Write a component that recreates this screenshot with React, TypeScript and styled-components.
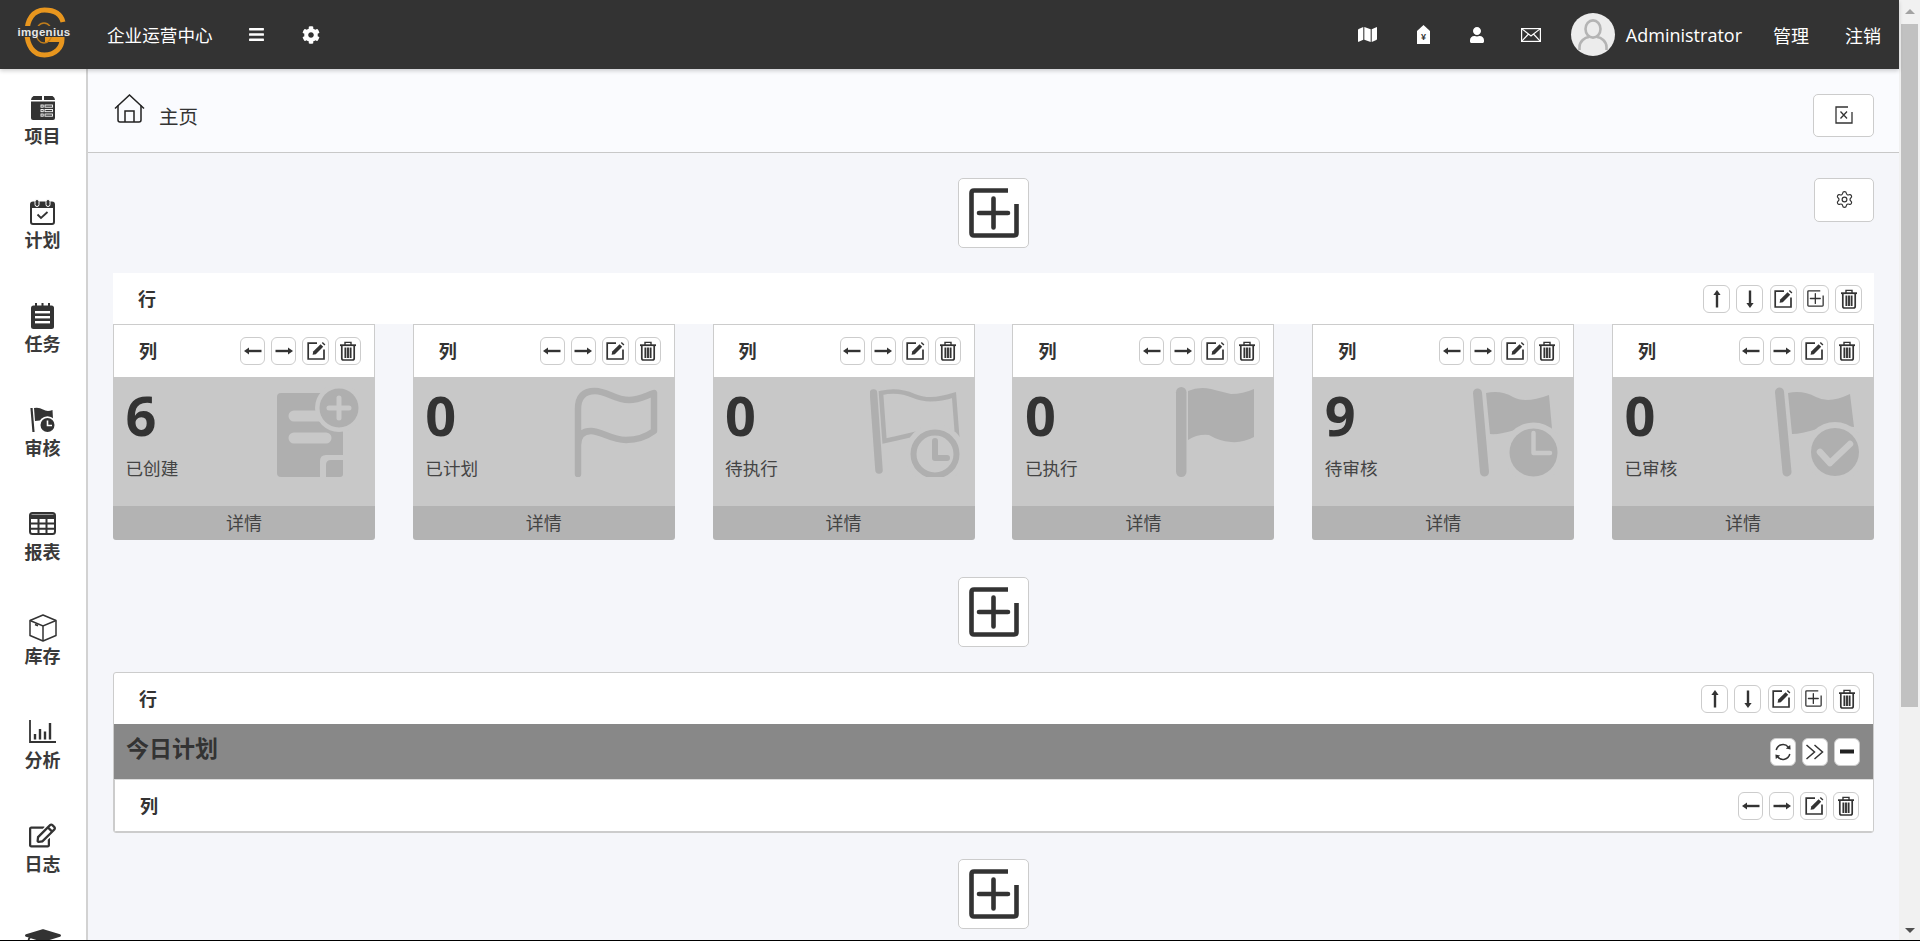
import React from "react";
import styled, { createGlobalStyle } from "styled-components";
import { FaBars, FaCog, FaMap, FaUser, FaRegEdit, FaGraduationCap } from "react-icons/fa";
import { Settings } from "lucide-react";

const INK = "#333";
const SHADE = "#afafaf";
const CARD = "#c8c8c8";

const Global = createGlobalStyle`
  html, body { margin: 0; padding: 0; height: 941px; overflow: hidden; background: #f5f6fa; }
  body { font-family: "Open Sans", "Noto Sans CJK SC", sans-serif; color: ${INK}; }
  * { box-sizing: border-box; }
`;

const Page = styled.div`
  display: flex;
  height: 941px;
  border-bottom: 1px solid #000;
  overflow: hidden;
`;
const Main = styled.div`
  flex: 1;
  min-width: 0;
  display: flex;
  flex-direction: column;
`;
const Rail = styled.div`
  width: 21px;
  background: #f1f1f1;
  display: flex;
  flex-direction: column;
  align-items: center;
`;
const RailArrow = styled.div<{ $down?: boolean }>`
  width: 0;
  height: 0;
  border-left: 5px solid transparent;
  border-right: 5px solid transparent;
  margin-left: 1px;
  ${(p) =>
    p.$down
      ? `border-top: 5px solid #505050; margin-top: 221px;`
      : `border-bottom: 5px solid #a3a3a3; margin-top: 9px;`}
`;
const RailThumb = styled.div`
  width: 17px;
  height: 683px;
  background: #c1c1c1;
  margin-top: 10px;
`;

const Header = styled.header`
  height: 69px;
  flex: none;
  background: #333;
  color: #fff;
  display: flex;
  align-items: center;
  padding-right: 18px;
  box-shadow: 0 2px 4px rgba(0, 0, 0, 0.18);
  position: relative;
  z-index: 2;
`;
const Brand = styled.div`
  width: 88px;
  height: 69px;
  flex: none;
  display: flex;
`;
const SiteName = styled.div`
  margin-left: 19px;
  width: 108px;
  font-size: 17.6px;
  line-height: 24px;
  white-space: nowrap;
`;
const HeadSlot = styled.div<{ $ml: number; $auto?: boolean }>`
  margin-left: ${(p) => (p.$auto ? "auto" : `${p.$ml}px`)};
  display: flex;
  align-items: center;
  flex: none;
  font-size: 18px;
  white-space: nowrap;
`;
const Avatar = styled.div`
  width: 44px;
  height: 43px;
  border-radius: 50%;
  background: #ececec;
  display: flex;
  align-items: center;
  justify-content: center;
`;

const Body = styled.div`
  flex: 1;
  min-height: 0;
  display: flex;
`;
const Sidebar = styled.nav`
  width: 88px;
  flex: none;
  background: #fff;
  border-right: 2px solid #d2d2d2;
  padding-right: 1px;
  overflow: hidden;
`;
const NavItem = styled.a`
  height: 104px;
  padding-top: 22.5px;
  display: flex;
  flex-direction: column;
  align-items: center;
`;
const NavIcon = styled.div`
  height: 32px;
  display: flex;
  align-items: center;
  justify-content: center;
`;
const NavLabel = styled.div`
  font-size: 18px;
  line-height: 24px;
  font-weight: 700;
  color: #3a3a3a;
`;

const Content = styled.main`
  flex: 1;
  min-width: 0;
  overflow: hidden;
`;
const Crumb = styled.div`
  height: 84px;
  background: #fafbfe;
  border-bottom: 1px solid #c8c8c8;
  padding: 0 25px 0 26px;
  display: flex;
  align-items: center;
`;
const CrumbText = styled.span`
  margin-left: 14px;
  margin-top: 13px;
  font-size: 19.5px;
  line-height: 26px;
  color: #333;
`;
const CrumbHome = styled.span`
  display: flex;
  margin-bottom: 4px;
`;
const CrumbAction = styled.div`
  margin-left: auto;
  margin-top: 9px;
`;
const Canvas = styled.div`
  padding: 25px 25px 0;
`;
const AddBar = styled.div<{ $mt: number; $mb: number }>`
  display: grid;
  grid-template-columns: 1fr auto 1fr;
  align-items: start;
  margin-top: ${(p) => p.$mt}px;
  margin-bottom: ${(p) => p.$mb}px;
`;
const AddButton = styled.button`
  grid-column: 2;
  width: 71px;
  height: 70px;
  padding: 0;
  background: #fff;
  border: 1px solid #ccc;
  border-radius: 5px;
  display: flex;
  align-items: center;
  justify-content: center;
`;
const PlainButton = styled.button<{ $w: number; $h: number; $lift?: number }>`
  width: ${(p) => p.$w}px;
  height: ${(p) => p.$h}px;
  padding: 0 0 ${(p) => p.$lift ?? 0}px;
  background: #fff;
  border: 1px solid #ccc;
  border-radius: 5px;
  display: flex;
  align-items: center;
  justify-content: center;
  color: ${INK};
`;
const SettingSlot = styled.div`
  grid-column: 3;
  justify-self: end;
`;
const IconButton = styled.button<{ $w: number }>`
  width: ${(p) => p.$w}px;
  height: 28px;
  flex: none;
  padding: 0;
  background: #fff;
  border: 1px solid #ccc;
  border-radius: 6px;
  display: flex;
  align-items: center;
  justify-content: center;
`;
const Actions = styled.div<{ $gap: number }>`
  display: flex;
  gap: ${(p) => p.$gap}px;
`;
const RowBar = styled.div`
  height: 51px;
  background: #fff;
  display: flex;
  align-items: center;
  justify-content: space-between;
  padding: 0 12px 0 25px;
`;
const Tag = styled.div`
  font-size: 18px;
  line-height: 24px;
  font-weight: 700;
  color: #333;
`;
const Columns = styled.div`
  display: grid;
  grid-template-columns: repeat(6, 1fr);
  column-gap: 37.8px;
`;
const ColHead = styled.div`
  height: 53px;
  background: #fff;
  border: 1px solid #ccc;
  border-bottom: 0;
  display: flex;
  align-items: center;
  justify-content: space-between;
  padding: 0 13px 0 25px;
`;
const CardBody = styled.div`
  height: 129px;
  background: ${CARD};
  display: flex;
  justify-content: space-between;
  padding: 10px 15px 0 12.5px;
`;
const Metric = styled.div`
  display: flex;
  flex-direction: column;
`;
const MetricValue = styled.div`
  font-size: 54px;
  line-height: 60px;
  font-weight: 700;
  color: #333;
  margin-top: -2px;
`;
const MetricLabel = styled.div`
  font-size: 17.6px;
  line-height: 24px;
  color: #444;
  margin-top: 11px;
`;
const CardFoot = styled.div`
  height: 34px;
  background: #b3b3b3;
  border-radius: 0 0 3px 3px;
  text-align: center;
  font-size: 18px;
  line-height: 35px;
  color: #444;
`;
const Panel = styled.section`
  height: 161px;
  background: #fff;
  border: 1px solid #ccc;
  border-radius: 3px;
  overflow: hidden;
`;
const PanelHead = styled.div`
  height: 51px;
  display: flex;
  align-items: center;
  justify-content: space-between;
  padding: 0 13px 0 25px;
`;
const PanelBar = styled.div`
  height: 55px;
  background: #888;
  display: flex;
  align-items: center;
  justify-content: space-between;
  padding: 0 13px 0 12px;
`;
const PanelTitle = styled.h3`
  margin: 0 0 7px;
  font-size: 23px;
  line-height: 30px;
  font-weight: 700;
  color: #333;
`;
const PanelColumn = styled.div`
  height: 53px;
  border-top: 1px solid #ddd;
  border-left: 1px solid #ccc;
  border-bottom: 1px solid #ccc;
  display: flex;
  align-items: center;
  justify-content: space-between;
  padding: 0 14px 0 25px;
`;

/* ---------- small tool icons ---------- */
const Arrow = ({ dir }: { dir: "l" | "r" | "u" | "d" }) => {
  const rot = { r: 0, l: 180, d: 90, u: 270 }[dir];
  return (
    <svg width="20" height="20" viewBox="0 0 20 20">
      <g transform={`rotate(${rot} 10 10)`}>
        <path d="M1.5 10H15" stroke={INK} strokeWidth="2.4" />
        <path d="M14 6.4L19 10L14 13.6Z" fill={INK} />
      </g>
    </svg>
  );
};
const EditMini = () => (
  <svg width="20" height="20" viewBox="0 0 20 20" fill="none">
    <path d="M11 2.2H2.2V18H18V8.6" stroke={INK} strokeWidth="1.7" />
    <path d="M6.6 13.8L7.2 10.6L14.6 3.2L17.2 5.8L9.8 13.2Z" fill={INK} />
    <path d="M15.8 2L16.8 1L19.4 3.6L18.4 4.6Z" fill={INK} />
  </svg>
);
const TrashMini = () => (
  <svg width="18" height="20" viewBox="0 0 18 20" fill="none">
    <path d="M1 4.2H17" stroke={INK} strokeWidth="1.8" />
    <path d="M6 4V1.4H12V4" stroke={INK} strokeWidth="1.4" />
    <path d="M2.8 5V17.2Q2.8 19 4.6 19H13.4Q15.2 19 15.2 17.2V5" stroke={INK} strokeWidth="1.7" />
    <path d="M6.4 6.5V17M9 6.5V17M11.6 6.5V17" stroke={INK} strokeWidth="1.9" />
  </svg>
);
const AddGlyph = ({ size }: { size: number }) => (
  <svg width={size} height={size} viewBox="0 0 50 50" fill="none">
    <path
      d="M39 2.5H5Q2.5 2.5 2.5 5V45Q2.5 47.5 5 47.5H45Q47.5 47.5 47.5 45V16"
      stroke={INK}
      strokeWidth={size > 30 ? 4.6 : 3.8}
    />
    <path d="M24.5 10.5V39.5M10 25H39" stroke={INK} strokeWidth={size > 30 ? 4.6 : 3.8} strokeLinecap="round" />
  </svg>
);
const Refresh = () => (
  <svg width="20" height="20" viewBox="0 0 20 20" fill="none">
    <path d="M3.2 8A7 7 0 0 1 15.4 5.2" stroke={INK} strokeWidth="1.5" />
    <path d="M16.8 12A7 7 0 0 1 4.6 14.8" stroke={INK} strokeWidth="1.5" />
    <path d="M12.8 6.4L17.6 7.6L17.2 3Z" fill={INK} />
    <path d="M7.2 13.6L2.4 12.4L2.8 17Z" fill={INK} />
  </svg>
);
const Chevrons = () => (
  <svg width="20" height="20" viewBox="0 0 20 20" fill="none">
    <path d="M1.5 3L9.5 10L1.5 17M9.5 3L17.5 10L9.5 17" stroke={INK} strokeWidth="1.5" />
  </svg>
);
const Minus = () => (
  <svg width="16" height="6" viewBox="0 0 16 6">
    <rect x="1" y="0.5" width="14" height="4" fill="#222" />
  </svg>
);

const colTools = (
  <Actions $gap={6}>
    <IconButton $w={25}><Arrow dir="l" /></IconButton>
    <IconButton $w={25}><Arrow dir="r" /></IconButton>
    <IconButton $w={27}><EditMini /></IconButton>
    <IconButton $w={26}><TrashMini /></IconButton>
  </Actions>
);
const rowTools = (
  <Actions $gap={6.25}>
    <IconButton $w={27}><Arrow dir="u" /></IconButton>
    <IconButton $w={27}><Arrow dir="d" /></IconButton>
    <IconButton $w={27}><EditMini /></IconButton>
    <IconButton $w={26}><AddGlyph size={17} /></IconButton>
    <IconButton $w={27}><TrashMini /></IconButton>
  </Actions>
);

/* ---------- large card drawings ---------- */
const Art = ({ children }: { children: React.ReactNode }) => (
  <svg width="90" height="90" viewBox="0 0 90 90" fill="none">{children}</svg>
);
const DocPlus = () => (
  <Art>
    <rect x="7" y="6" width="66" height="84" rx="4" fill={SHADE} />
    <path d="M24 29H52M24 51H56" stroke={CARD} strokeWidth="11" strokeLinecap="round" />
    <path d="M50 90V74Q50 68 56 68H73V90Z" fill={CARD} />
    <path d="M56 90V78Q56 73 61 73H73V87Q73 90 70 90Z" fill={SHADE} />
    <circle cx="69" cy="21" r="24" fill={CARD} />
    <circle cx="69" cy="21" r="19.5" fill={SHADE} />
    <path d="M69 11V31M59 21H79" stroke={CARD} strokeWidth="5" strokeLinecap="round" />
  </Art>
);
const FlagOutline = () => (
  <Art>
    <path
      d="M8 87V22Q8 4 25 4C37 4 45 13 59 13C69 13 75 9 84 6V44Q72 53 56 53C41 53 31 44 21 44Q8 44 8 58"
      stroke={SHADE}
      strokeWidth="6.5"
      strokeLinecap="round"
      strokeLinejoin="round"
    />
  </Art>
);
const FlagClockOutline = () => (
  <Art>
    <path d="M3.5 6L9 83" stroke={SHADE} strokeWidth="7.5" strokeLinecap="round" />
    <path d="M11 6Q28 2 44 9T84 8L87 47Q66 42 45 47T14.5 54Z" stroke={SHADE} strokeWidth="4.5" />
    <circle cx="65" cy="67" r="30" fill={CARD} />
    <circle cx="65" cy="67" r="21.5" stroke={SHADE} strokeWidth="6" />
    <path d="M65 54V71H77" stroke={SHADE} strokeWidth="6" strokeLinecap="round" strokeLinejoin="round" />
  </Art>
);
const FlagSolid = () => (
  <Art>
    <rect x="7" y="0" width="10.5" height="90" rx="5.2" fill={SHADE} />
    <path d="M19 4Q30 -1 42 2T62 7Q74 7 85 2V50Q74 56 62 55T40 48Q28 47 19 53Z" fill={SHADE} />
  </Art>
);
const FlagClockSolid = () => (
  <Art>
    <path d="M8.5 6L15.5 85" stroke={SHADE} strokeWidth="9" strokeLinecap="round" />
    <path d="M17 6Q32 3 44 10T80 8L83 42Q62 38 46 43T21 47Z" fill={SHADE} />
    <circle cx="64.5" cy="65.5" r="30" fill={CARD} />
    <circle cx="64.5" cy="65.5" r="24" fill={SHADE} />
    <path d="M64.5 46V66H81" stroke={CARD} strokeWidth="4.5" strokeLinecap="round" strokeLinejoin="round" />
  </Art>
);
const FlagCheck = () => (
  <Art>
    <path d="M10.5 5L18 85" stroke={SHADE} strokeWidth="9" strokeLinecap="round" />
    <path d="M19 6Q34 3 47 10T81 7L85 40Q64 37 48 42T23 47Z" fill={SHADE} />
    <circle cx="66" cy="65" r="30" fill={CARD} />
    <circle cx="66" cy="65" r="24" fill={SHADE} />
    <path d="M51 65L61 76L81 57" stroke={CARD} strokeWidth="6.5" strokeLinecap="round" strokeLinejoin="round" />
  </Art>
);

/* ---------- sidebar drawings ---------- */
const NAV = "#333";
const ProjectIcon = () => (
  <svg width="24" height="24" viewBox="0 0 24 24">
    <path d="M2.5 0H11V4H0Q0 1.5 2.5 0ZM13 0H21.5Q24 1.5 24 4H13Z" fill={NAV} />
    <path d="M0 5.5H24V22Q24 24 22 24H2Q0 24 0 22Z" fill={NAV} />
    <g fill="none" stroke="#fff" strokeWidth=".9">
      <rect x="10" y="9" width="2.2" height="2.2" />
      <rect x="14" y="9" width="7.5" height="2.2" />
      <rect x="10" y="13.5" width="2.2" height="2.2" />
      <rect x="14" y="13.5" width="7.5" height="2.2" />
      <rect x="10" y="18" width="2.2" height="2.2" />
      <rect x="14" y="18" width="7.5" height="2.2" />
    </g>
  </svg>
);
const PlanIcon = () => (
  <svg width="25" height="26" viewBox="0 0 25 26" fill="none">
    <rect x="1" y="3.5" width="23" height="21.5" rx="2" stroke={NAV} strokeWidth="2" />
    <path d="M1 3.5H24V9H1Z" fill={NAV} />
    <rect x="5" y="0.5" width="4" height="7" rx="2" fill={NAV} stroke="#fff" strokeWidth="1" />
    <rect x="16" y="0.5" width="4" height="7" rx="2" fill={NAV} stroke="#fff" strokeWidth="1" />
    <path d="M7.5 15.5L11 19L17.5 13" stroke={NAV} strokeWidth="1.8" />
  </svg>
);
const TaskIcon = () => (
  <svg width="23" height="26" viewBox="0 0 23 26">
    <rect x="0" y="2.5" width="23" height="23.5" rx="2.5" fill={NAV} />
    <path d="M5 0V5M11.5 0V5M18 0V5" stroke={NAV} strokeWidth="2" />
    <rect x="4" y="8" width="15" height="2.4" fill="#fff" />
    <rect x="4" y="13" width="15" height="2.4" fill="#fff" />
    <rect x="4" y="18" width="15" height="2.4" fill="#fff" />
  </svg>
);
const AuditIcon = () => (
  <svg width="25" height="26" viewBox="0 0 25 26" fill="none">
    <path d="M1.5 1L3.5 25" stroke={NAV} strokeWidth="2.2" />
    <path d="M4 1Q9 0 13 2.5T22.5 3L23 12Q18 10 14 12T5 14Z" fill={NAV} />
    <circle cx="17.5" cy="18" r="8.8" fill="#fff" />
    <circle cx="17.5" cy="18" r="7" fill={NAV} />
    <path d="M17.5 13.5V18.5H22" stroke="#fff" strokeWidth="1.6" />
  </svg>
);
const TableIcon = () => (
  <svg width="27" height="23" viewBox="0 0 27 23" fill="none">
    <rect x="1" y="1" width="25" height="21" rx="2.5" stroke={NAV} strokeWidth="2" />
    <path d="M1 2.5H26V7H1Z" fill={NAV} />
    <path d="M1 11.5H26M1 16.8H26M9.5 6V22M17.5 6V22" stroke={NAV} strokeWidth="2" />
  </svg>
);
const BoxIcon = () => (
  <svg width="28" height="28" viewBox="0 0 28 28" fill="none" stroke={NAV} strokeWidth="1.5">
    <path d="M14 1L27 6.5V21.5L14 27L1 21.5V6.5Z" strokeLinejoin="round" />
    <path d="M1 6.5L14 12L27 6.5M14 12V27M6 10.5L9 11.8" />
  </svg>
);
const ChartIcon = () => (
  <svg width="27" height="23" viewBox="0 0 27 23" fill="none" stroke={NAV}>
    <path d="M1 0V22H27" strokeWidth="1.8" />
    <path d="M6 14V19.5M11 9V19.5M16 11.5V19.5M21 3V19.5" strokeWidth="2.4" />
  </svg>
);

/* ---------- header drawings ---------- */
const Logo = () => (
  <svg width="88" height="69" viewBox="0 0 88 69" fill="none">
    <path
      d="M63 22C61 14 54 10 44.5 10C33 10 27 20 27 32.5C27 45 33 55 44.5 55C56 55 62 47 62 39.5H45"
      stroke="#e8961e"
      strokeWidth="5"
    />
    <ellipse cx="44" cy="33" rx="8" ry="10" stroke="#c07d1c" strokeWidth="1.4" />
    <rect x="19" y="26" width="51" height="11" fill="#333" />
    <text
      x="44"
      y="36"
      textAnchor="middle"
      fontFamily="'Liberation Sans', sans-serif"
      fontWeight="700"
      fontSize="11.5"
      letterSpacing=".3"
      fill="#e6e6e6"
    >
      imgenius
    </text>
  </svg>
);
const PriceTag = () => (
  <svg width="13" height="19" viewBox="0 0 13 19">
    <path d="M6.5 0L13 6V19H0V6Z" fill="#fff" />
    <text x="6.5" y="15" textAnchor="middle" fontSize="9" fontWeight="700" fontFamily="'Liberation Sans', sans-serif" fill="#333">
      ¥
    </text>
  </svg>
);
const Envelope = () => (
  <svg width="20" height="14" viewBox="0 0 20 14" fill="none" stroke="#fff" strokeWidth="1.2">
    <rect x=".6" y=".6" width="18.8" height="12.8" />
    <path d="M.6 .6L10 8L19.4 .6M.6 13.4L7.5 6M19.4 13.4L12.5 6" />
  </svg>
);
const AvatarFace = () => (
  <svg width="30" height="32" viewBox="0 0 30 32" fill="none" stroke="#b4b4b4" strokeWidth="2.6">
    <ellipse cx="15" cy="10" rx="7.5" ry="8.6" />
    <path d="M1.5 31V28C1.5 22 7 18.5 11 18M28.5 31V28C28.5 22 23 18.5 19 18" />
  </svg>
);
const HomeIcon = () => (
  <svg width="31" height="29" viewBox="0 0 31 29" fill="none" stroke="#222" strokeWidth="1.5">
    <path d="M1 14.5L15.5 1L30 14.5" />
    <path d="M4 11.5V26Q4 28 6 28H25Q27 28 27 26V11.5M11 28V17H20V28" />
  </svg>
);
const CloseBox = () => (
  <svg width="18" height="18" viewBox="0 0 18 18" fill="none" stroke={INK}>
    <path d="M13 1H1V17H17V6" strokeWidth="1.3" />
    <path d="M5.5 5.5L12 12.5M12 5.5L5.5 12.5" strokeWidth="1.3" />
  </svg>
);

const navItems: [React.ReactNode, string][] = [
  [<ProjectIcon />, "项目"],
  [<PlanIcon />, "计划"],
  [<TaskIcon />, "任务"],
  [<AuditIcon />, "审核"],
  [<TableIcon />, "报表"],
  [<BoxIcon />, "库存"],
  [<ChartIcon />, "分析"],
  [<FaRegEdit size={27} color={NAV} />, "日志"],
];

const cards: [string, string, React.ReactNode][] = [
  ["6", "已创建", <DocPlus />],
  ["0", "已计划", <FlagOutline />],
  ["0", "待执行", <FlagClockOutline />],
  ["0", "已执行", <FlagSolid />],
  ["9", "待审核", <FlagClockSolid />],
  ["0", "已审核", <FlagCheck />],
];

export default function App() {
  return (
    <>
      <Global />
      <Page>
        <Main>
          <Header>
            <Brand><Logo /></Brand>
            <SiteName>企业运营中心</SiteName>
            <HeadSlot $ml={33}><FaBars size={17} /></HeadSlot>
            <HeadSlot $ml={37}><FaCog size={18} /></HeadSlot>
            <HeadSlot $ml={0} $auto><FaMap size={19} /></HeadSlot>
            <HeadSlot $ml={40}><PriceTag /></HeadSlot>
            <HeadSlot $ml={39}><FaUser size={16} /></HeadSlot>
            <HeadSlot $ml={36}><Envelope /></HeadSlot>
            <HeadSlot $ml={30}><Avatar><AvatarFace /></Avatar></HeadSlot>
            <HeadSlot $ml={11}>Administrator</HeadSlot>
            <HeadSlot $ml={31}>管理</HeadSlot>
            <HeadSlot $ml={36}>注销</HeadSlot>
          </Header>
          <Body>
            <Sidebar>
              {navItems.map(([icon, label]) => (
                <NavItem key={label}>
                  <NavIcon>{icon}</NavIcon>
                  <NavLabel>{label}</NavLabel>
                </NavItem>
              ))}
              <NavItem>
                <NavIcon><FaGraduationCap size={36} color={NAV} /></NavIcon>
              </NavItem>
            </Sidebar>
            <Content>
              <Crumb>
                <CrumbHome><HomeIcon /></CrumbHome>
                <CrumbText>主页</CrumbText>
                <CrumbAction>
                  <PlainButton $w={61} $h={43}><CloseBox /></PlainButton>
                </CrumbAction>
              </Crumb>
              <Canvas>
                <AddBar $mt={0} $mb={25}>
                  <AddButton><AddGlyph size={50} /></AddButton>
                  <SettingSlot>
                    <PlainButton $w={60} $h={44} $lift={2}><Settings size={19} strokeWidth={1.5} /></PlainButton>
                  </SettingSlot>
                </AddBar>
                <RowBar>
                  <Tag>行</Tag>
                  {rowTools}
                </RowBar>
                <Columns>
                  {cards.map(([value, label, art]) => (
                    <div key={label}>
                      <ColHead>
                        <Tag>列</Tag>
                        {colTools}
                      </ColHead>
                      <CardBody>
                        <Metric>
                          <MetricValue>{value}</MetricValue>
                          <MetricLabel>{label}</MetricLabel>
                        </Metric>
                        {art}
                      </CardBody>
                      <CardFoot>详情</CardFoot>
                    </div>
                  ))}
                </Columns>
                <AddBar $mt={37} $mb={25}>
                  <AddButton><AddGlyph size={50} /></AddButton>
                </AddBar>
                <Panel>
                  <PanelHead>
                    <Tag>行</Tag>
                    {rowTools}
                  </PanelHead>
                  <PanelBar>
                    <PanelTitle>今日计划</PanelTitle>
                    <Actions $gap={6}>
                      <IconButton $w={26}><Refresh /></IconButton>
                      <IconButton $w={26}><Chevrons /></IconButton>
                      <IconButton $w={26}><Minus /></IconButton>
                    </Actions>
                  </PanelBar>
                  <PanelColumn>
                    <Tag>列</Tag>
                    {colTools}
                  </PanelColumn>
                </Panel>
                <AddBar $mt={26} $mb={0}>
                  <AddButton><AddGlyph size={50} /></AddButton>
                </AddBar>
              </Canvas>
            </Content>
          </Body>
        </Main>
        <Rail>
          <RailArrow />
          <RailThumb />
          <RailArrow $down />
        </Rail>
      </Page>
    </>
  );
}
